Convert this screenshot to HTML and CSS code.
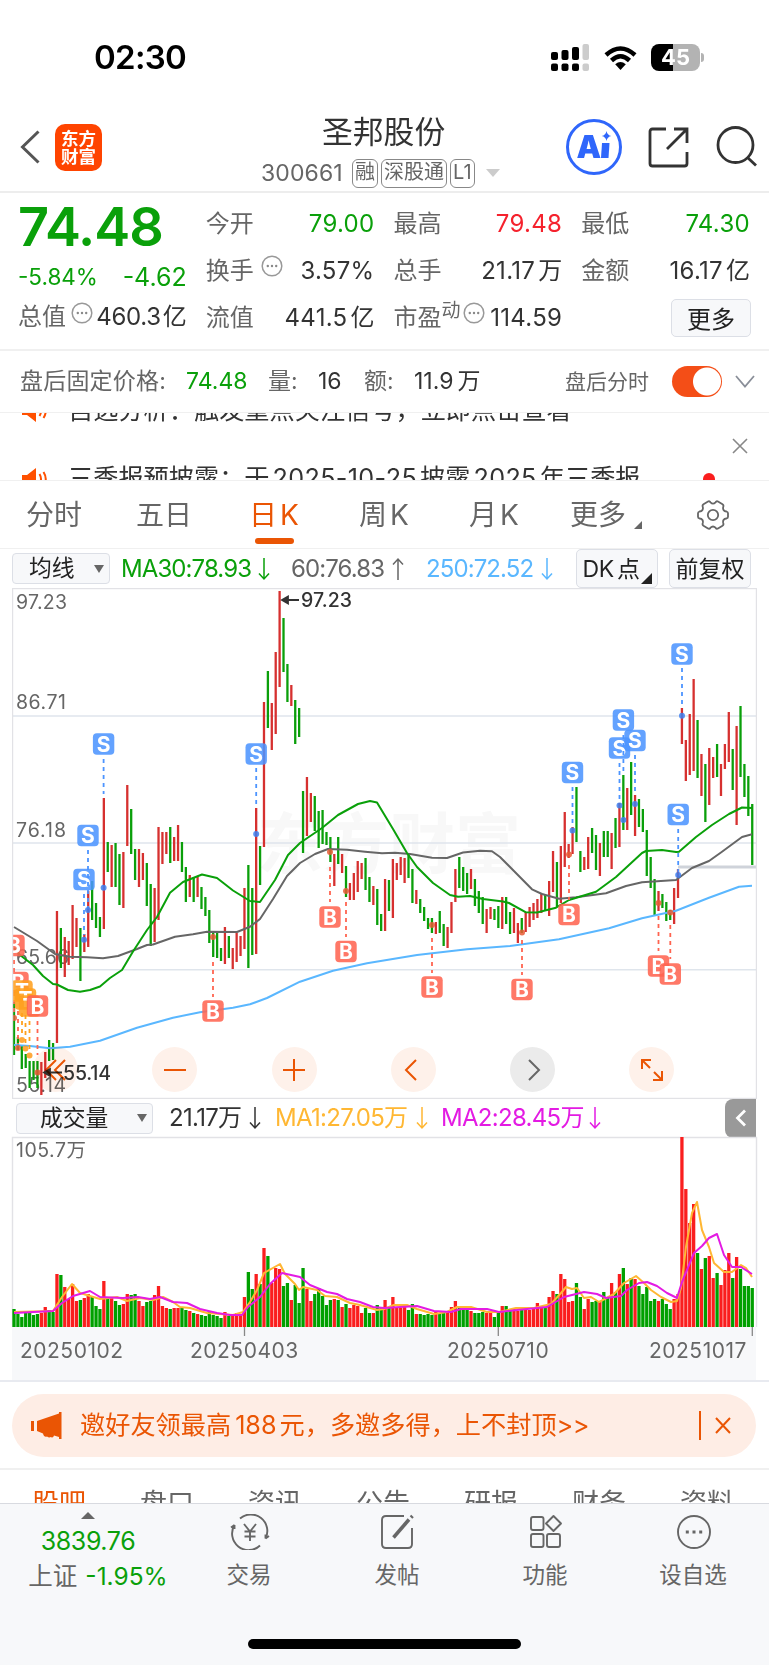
FILE: index.html
```html
<!DOCTYPE html>
<html lang="zh-CN">
<head>
    <meta charset="UTF-8">
    <meta name="viewport" content="width=device-width, initial-scale=1.0">
    <title>圣邦股份 300661</title>
    <link rel="stylesheet" href="styles.css">
</head>
<body>
    <svg class="defs" width="0" height="0">
        <symbol id="dots" viewBox="0 0 22 22">
            <circle cx="11" cy="11" r="9.8" fill="none" stroke="#999" stroke-width="1.5"/>
            <circle cx="6.8" cy="11" r="1.2" fill="#888"/>
            <circle cx="11" cy="11" r="1.2" fill="#888"/>
            <circle cx="15.2" cy="11" r="1.2" fill="#888"/>
        </symbol>
        <symbol id="down" viewBox="0 0 12 24">
            <path d="M6 1v21M1 16.5l5 5.5 5-5.5" fill="none" stroke="currentColor" stroke-width="1.5"/>
        </symbol>
        <symbol id="up" viewBox="0 0 12 24">
            <path d="M6 23V2M1 7.5L6 2l5 5.5" fill="none" stroke="currentColor" stroke-width="1.5"/>
        </symbol>
        <symbol id="horn" viewBox="0 0 26 24">
            <path d="M0 8h5l9-7v22l-9-7H0z" fill="#ff5000"/>
            <path d="M17.500 7q3 5 0 10M21.500 5q4.500 7 0 14" fill="none" stroke="#ff5000" stroke-width="2"/>
        </symbol>
    </svg>

    <div class="status">
        <span class="time">02:30</span>
        <svg class="signal" width="38" height="27" viewBox="0 0 38 27">
            <rect x="0" y="8" width="7" height="8" rx="2"/>
            <rect x="10.500" y="6" width="7" height="10" rx="2"/>
            <rect x="21" y="3" width="7" height="13" rx="2"/>
            <rect x="31.500" y="0" width="6.500" height="16" rx="2" fill="#ccc"/>
            <rect x="0" y="19.500" width="7" height="7.500" rx="2"/>
            <rect x="10.500" y="19.500" width="7" height="7.500" rx="2"/>
            <rect x="21" y="19.500" width="7" height="7.500" rx="2"/>
            <rect x="31.500" y="19.500" width="6.500" height="7.500" rx="2" fill="#ccc"/>
        </svg>
        <svg class="wifi" width="33" height="24" viewBox="0 0 33 24">
            <path d="M2 9Q16.500 -4 31 9" fill="none" stroke="#000" stroke-width="4.500"/>
            <path d="M7.500 14.500q9-8.500 18 0" fill="none" stroke="#000" stroke-width="4.500"/>
            <path d="M16.500 24l-5.300-5.800q5.300-4.600 10.600 0z"/>
        </svg>
        <div class="battery">45</div>
        <i class="battery-tip"></i>
    </div>

    <div class="header">
        <svg class="back" width="21" height="34" viewBox="0 0 21 34">
            <path d="M18.500 1.500L2.500 17l16 15.500" fill="none" stroke="#555" stroke-width="3"/>
        </svg>
        <div class="logo">东方<br>财富</div>
        <div class="title">
            <h1>圣邦股份</h1>
            <div class="code">
                <span>300661</span>
                <b>融</b><b>深股通</b><b>L1</b>
                <i class="caret"></i>
            </div>
        </div>
        <svg class="ai" width="56" height="56" viewBox="0 0 56 56">
            <circle cx="28" cy="28" r="26.500" fill="#fff" stroke="#2f66fb" stroke-width="3"/>
            <text x="10.500" y="39">A</text>
            <path d="M36 24h7.500l-1 15H35z" fill="#2f66fb"/>
            <path d="M40.500 12q.8 4.200 4.800 5-4 .8-4.800 5-.8-4.200-4.800-5 4-.8 4.800-5z" fill="#2f66fb"/>
        </svg>
        <svg class="share" width="42" height="42" viewBox="0 0 42 42">
            <path d="M18 3H4.500Q2 3 2 5.500v32Q2 40 4.500 40h32q2.500 0 2.500-2.500V26M19 23L38 4M26 3h13v14" fill="none" stroke="#333" stroke-width="2.800"/>
        </svg>
        <svg class="search" width="42" height="42" viewBox="0 0 42 42">
            <circle cx="19.500" cy="19" r="17.500" fill="none" stroke="#333" stroke-width="2.800"/>
            <path d="M31.500 31.500l8.500 8" stroke="#333" stroke-width="2.800"/>
        </svg>
    </div>

    <div class="quote">
        <div class="col first">
            <div class="price">74.48</div>
            <div class="change"><span>-5.84%</span><span class="diff">-4.62</span></div>
            <div class="row"><label>总值</label><svg class="tip"><use href="#dots"/></svg><span>460.3<u>亿</u></span></div>
        </div>
        <div class="col">
            <div class="row"><label>今开</label><span class="green">79.00</span></div>
            <div class="row"><label>换手</label><svg class="tip wide"><use href="#dots"/></svg><span>3.57%</span></div>
            <div class="row"><label>流值</label><span>441.5<u>亿</u></span></div>
        </div>
        <div class="col">
            <div class="row"><label>最高</label><span class="red">79.48</span></div>
            <div class="row"><label>总手</label><span>21.17<u>万</u></span></div>
            <div class="row"><label>市盈</label><sup>动</sup><svg class="tip"><use href="#dots"/></svg><span>114.59</span></div>
        </div>
        <div class="col">
            <div class="row"><label>最低</label><span class="green">74.30</span></div>
            <div class="row"><label>金额</label><span>16.17<u>亿</u></span></div>
            <div class="row"><button class="more">更多</button></div>
        </div>
    </div>

    <div class="after">
        <label class="fixed">盘后固定价格:</label><span class="green">74.48</span>
        <label>量:</label><span>16</span>
        <label>额:</label><span>11.9<u>万</u></span>
        <em>盘后分时</em>
        <div class="toggle"></div>
        <svg width="20" height="13" viewBox="0 0 20 13"><path d="M1 1l9 10.500L19 1" fill="none" stroke="#8a8f99" stroke-width="1.800"/></svg>
    </div>

    <div class="news">
        <div class="items">
            <div class="item"><svg width="26" height="24"><use href="#horn"/></svg>自选分析：触发重点关注信号，立即点击查看</div>
            <div class="item"><svg width="26" height="24"><use href="#horn"/></svg>三季报预披露：于<u>2025-10-25</u>披露<u>2025</u>年三季报<i class="dot"></i></div>
        </div>
        <svg class="close" width="16" height="16" viewBox="0 0 16 16"><path d="M1 1l14 14M15 1L1 15" stroke="#888" stroke-width="1.600"/></svg>
    </div>

    <div class="tabs">
        <span>分时</span>
        <span>五日</span>
        <span class="active">日<u>K</u></span>
        <span>周<u>K</u></span>
        <span>月<u>K</u></span>
        <span class="last">更多<i class="corner"></i></span>
        <svg width="32" height="32" viewBox="0 0 32 32" fill="none" stroke="#666" stroke-width="1.800">
            <path d="M11 2.500q1.500-.8 2.500.8 2.500 2.500 5 0 1-1.600 2.500-.8l4.500 2.700q1.500 1 .7 2.800-.8 4 3.300 4.500 1.500.4 1.500 1.800v3.400q0 1.400-1.500 1.800-4.100.5-3.300 4.500.8 1.800-.7 2.800L21 29.500q-1.500.8-2.500-.8-2.500-2.500-5 0-1 1.600-2.500.8l-4.500-2.700q-1.500-1-.7-2.800.8-4-3.300-4.500Q1 19.100 1 17.700v-3.400q0-1.400 1.500-1.800 4.100-.5 3.300-4.500Q5 6.200 6.500 5.200z"/>
            <circle cx="16" cy="16" r="5.200"/>
        </svg>
    </div>

    <div class="ma-bar">
        <div class="select avg">均线<i></i></div>
        <span class="ma30">MA30:78.93</span><svg class="green"><use href="#down"/></svg>
        <span class="ma60">60:76.83</span><svg class="ma60"><use href="#up"/></svg>
        <span class="ma250">250:72.52</span><svg class="ma250"><use href="#down"/></svg>
        <button class="dk">DK<u>点</u><i class="corner"></i></button>
        <button class="fq">前复权</button>
    </div>

    <div class="kline">
        <svg id="kline" width="745" height="511" viewBox="12 588 745 511"></svg>
        <div class="controls">
            <button><svg width="24" height="24" viewBox="0 0 24 24"><path d="M12 2L2 12l10 10M21 2L11 12l10 10"/></svg></button>
            <button><svg width="24" height="24" viewBox="0 0 24 24"><path d="M1 12h22"/></svg></button>
            <button><svg width="24" height="24" viewBox="0 0 24 24"><path d="M1 12h22M12 1v22"/></svg></button>
            <button><svg width="24" height="24" viewBox="0 0 24 24"><path d="M15 2L5 12l10 10"/></svg></button>
            <button class="gray"><svg width="24" height="24" viewBox="0 0 24 24"><path d="M8 2l10 10L8 22"/></svg></button>
            <button><svg width="24" height="24" viewBox="0 0 24 24"><path d="M2 11V2h9M2 2l8 8M22 13v9h-9M22 22l-8-8"/></svg></button>
        </div>
    </div>

    <div class="vol-bar">
        <div class="select vol">成交量<i></i></div>
        <span class="v0">21.17万</span><svg class="v0"><use href="#down"/></svg>
        <span class="v1">MA1:27.05万</span><svg class="v1"><use href="#down"/></svg>
        <span class="v2">MA2:28.45万</span><svg class="v2"><use href="#down"/></svg>
        <div class="collapse"><svg width="12" height="18" viewBox="0 0 12 18"><path d="M10 1.500L2.500 9l7.500 7.500" fill="none" stroke="#fff" stroke-width="2.800"/></svg></div>
    </div>
    <svg id="volume" width="745" height="190" viewBox="12 1137 745 190"></svg>
    <div class="dates">
        <span>20250102</span><span>20250403</span><span>20250710</span><span>20251017</span>
    </div>

    <div class="banner-wrap">
        <div class="banner">
            <svg width="31" height="27" viewBox="0 0 31 27" fill="#ea5504"><path d="M0 9h3v10H0zM6 9L28 1.500V0h2.500v27H28v-2l-5-1.500q-1 3-3 1.500-2 1-4-.5-3 1-4-3L6 19z"/></svg>
            <p>邀好友领最高<u>188</u>元，多邀多得，上不封顶<s>&gt;&gt;</s></p>
            <svg class="x" width="16" height="17" viewBox="0 0 16 17"><path d="M1 1l14 15M15 1L1 16" stroke="#ea5504" stroke-width="2"/></svg>
        </div>
    </div>

    <div class="subtabs">
        <span class="active">股吧</span><span>盘口</span><span>资讯</span><span>公告</span><span>研报</span><span>财务</span><span>资料</span>
    </div>

    <div class="bottom">
        <div class="index">
            <i></i>
            <div class="point">3839.76</div>
            <div class="name">上证<span>-1.95%</span></div>
        </div>
        <div class="nav">
            <svg width="40" height="36" viewBox="0 0 40 36">
                <path d="M10 4.500A16.500 16.500 0 0 1 35.500 24.500l3.500-2.500M30 31.500A16.500 16.500 0 0 1 4.500 11L1 13.500M4.500 11v4M35.500 24.500v-4"/>
                <path d="M14 10l6 7.500L26 10M20 17.500V27M14.500 17.500h11M14.500 22.500h11"/>
            </svg>
            <span>交易</span>
        </div>
        <div class="nav">
            <svg width="36" height="36" viewBox="0 0 36 36">
                <path d="M24 2H6Q2 2 2 6v24q0 4 4 4h22q4 0 4-4V14"/>
                <path d="M13.500 23.500L29 5.500" stroke-width="3.500"/><path d="M31 3.500l1.500-1.500" stroke-width="3.500"/>
            </svg>
            <span>发帖</span>
        </div>
        <div class="nav">
            <svg width="34" height="36" viewBox="0 0 34 36">
                <rect x="2" y="3" width="12.500" height="13" rx="2"/><rect x="2" y="20" width="12.500" height="13" rx="2"/><rect x="18" y="20" width="13" height="13" rx="2"/>
                <path d="M24.500 2l7.500 7.500-7.500 7.500L17 9.500z" stroke-linejoin="round"/>
            </svg>
            <span>功能</span>
        </div>
        <div class="nav">
            <svg width="36" height="36" viewBox="0 0 36 36">
                <circle cx="18" cy="18" r="16"/>
                <path d="M9.800 18h3M16.500 18h3M23.200 18h3" stroke-width="3"/>
            </svg>
            <span>设自选</span>
        </div>
        <div class="home"></div>
    </div>
    <script src="chart.js"></script>
</body>
</html>
```
FILE: styles.css
```css
* {
    box-sizing: border-box;
}

body {
    margin: 0;
    width: 769px;
    height: 1665px;
    overflow: hidden;
    background: #fff;
    color: #333;
    font-family: Inter, "Noto Sans CJK SC", sans-serif;
    font-size: 24px;
    line-height: 1;
}

svg {
    display: block;
    flex: none;
}

button {
    font-family: inherit;
    padding: 0;
    margin: 0;
}

u,
s {
    text-decoration: none;
}

.defs {
    position: absolute;
}

.green {
    color: #0aa00a;
}

.red {
    color: #f5222d;
}

/* status bar */
.status {
    display: flex;
    align-items: center;
    height: 115px;
    padding-left: 94px;
}

.time {
    width: 457px;
    font-size: 33px;
    font-weight: 600;
    color: #000;
    letter-spacing: -0.7px;
}

.wifi {
    margin: 0 14px 0 15px;
}

.battery {
    width: 49px;
    height: 27px;
    border-radius: 8px;
    background: linear-gradient(90deg, #000 45%, #b3b3b3 45%);
    color: #fff;
    font-size: 22px;
    font-weight: 700;
    line-height: 27px;
    text-align: center;
}

.battery-tip {
    width: 3px;
    height: 9px;
    margin-left: 1px;
    border-radius: 0 3px 3px 0;
    background: #b3b3b3;
}

/* header */
.header {
    display: flex;
    align-items: center;
    height: 78px;
    padding: 0 0 12px 20px;
    border-bottom: 2px solid #ededed;
}

.logo {
    width: 47px;
    height: 47px;
    margin-left: 14px;
    padding: 6px 0 0 6px;
    border-radius: 10px;
    background: #ff4400;
    color: #fff;
    font-size: 17.500px;
    font-weight: 700;
    line-height: 18px;
    white-space: nowrap;
}

.title {
    width: 248px;
    margin-left: 159px;
    padding-top: 8px;
}

h1 {
    margin: 0;
    padding-left: 61px;
    font-size: 30.800px;
    font-weight: 400;
    line-height: 36px;
}

.code {
    display: flex;
    align-items: center;
    height: 30px;
    margin-top: 8px;
    color: #666;
    font-size: 23px;
}

.code span {
    width: 91px;
    letter-spacing: 0.1px;
}

.code b {
    height: 29px;
    margin-right: 3px;
    padding: 0 2px;
    border: 1.500px solid #888;
    border-radius: 6px;
    font-size: 20px;
    font-weight: 400;
    line-height: 25px;
    white-space: nowrap;
}

.caret {
    margin-left: 8px;
    border: 7px solid transparent;
    border-top: 8px solid #ccc;
    border-bottom: 0;
}

.ai {
    margin-left: 57px;
}

.ai text {
    font-size: 31px;
    font-weight: 900;
    fill: #2f66fb;
}

.share {
    margin-left: 26px;
}

.search {
    margin-left: 26px;
}

/* quote table */
.quote {
    display: flex;
    gap: 19px;
    height: 158px;
    padding: 7px 19px 0 18px;
    border-bottom: 2px solid #f0f0f0;
}

.col {
    width: 169px;
}

.row {
    display: flex;
    align-items: center;
    height: 47px;
}

.row label {
    color: #666;
}

.row span {
    margin-left: auto;
    letter-spacing: 0.3px;
    white-space: nowrap;
}

.row u {
    margin-left: 3px;
    letter-spacing: 0;
}

.tip {
    width: 22px;
    height: 22px;
    margin: -9px 0 0 5px;
}

.tip.wide {
    margin-left: 7px;
}

.row sup {
    margin-top: -14px;
    font-size: 19px;
    color: #666;
}

.row sup + .tip {
    margin-left: 2px;
}

.first .row {
    height: 46px;
}

.first .row span {
    letter-spacing: -0.3px;
}

.first .row u {
    margin-left: 2px;
}

.price {
    height: 55px;
    color: #0aa00a;
    font-size: 54px;
    font-weight: 600;
    letter-spacing: -1px;
}

.change {
    display: flex;
    justify-content: space-between;
    align-items: center;
    height: 39px;
    padding-top: 5px;
    color: #0aa00a;
    font-size: 22.500px;
}

.diff {
    font-size: 25px;
}

.more {
    width: 80px;
    height: 38px;
    margin-left: auto;
    margin-right: -1px;
    padding-bottom: 3px;
    border: 1.500px solid #dcdfe6;
    border-radius: 5px;
    background: #f7f8fa;
    color: #222;
    font-size: 24px;
}

/* fixed price after close */
.after {
    display: flex;
    align-items: center;
    height: 62px;
    padding: 0 0 1px 20px;
    border-bottom: 1px solid #f0f0f0;
    font-size: 23px;
    white-space: nowrap;
}

.after label {
    width: 50px;
    color: #666;
}

.after .fixed {
    width: 166px;
    letter-spacing: 0.2px;
}

.after span {
    width: 82px;
}

.after u {
    margin-left: 4px;
}

.after label + span:nth-of-type(2) {
    width: 46px;
}

.after em {
    width: 107px;
    margin-left: 69px;
    color: #666;
    font-size: 21px;
    font-style: normal;
}

.toggle {
    width: 50px;
    height: 31px;
    margin-right: 13px;
    border-radius: 16px;
    background: radial-gradient(circle at 35px 15.500px, #fff 13.500px, #f44e17 14.500px);
}

/* news ticker */
.news {
    position: relative;
    height: 68px;
    overflow: hidden;
    border-bottom: 1px solid #f0f0f0;
}

.items {
    margin-top: -36px;
}

.item {
    display: flex;
    align-items: center;
    height: 68px;
    padding-left: 22px;
    font-size: 25.200px;
    white-space: nowrap;
}

.item svg {
    margin-right: 20px;
}

.item u {
    margin: 0 3px;
    letter-spacing: 0.35px;
}

.dot {
    width: 12px;
    height: 12px;
    margin-left: 62px;
    border-radius: 50%;
    background: #fa1e1e;
}

.close {
    position: absolute;
    left: 732px;
    top: 25px;
}

/* period tabs */
.tabs {
    display: flex;
    align-items: center;
    height: 68px;
    padding-left: 26px;
    border-bottom: 1px solid #f0f0f0;
    color: #666;
    font-size: 28px;
}

.tabs span {
    position: relative;
    width: 110px;
    white-space: nowrap;
}

.tabs u {
    margin-left: 3px;
}

.tabs span:nth-child(2) {
    width: 113px;
}

.tabs .active {
    color: #ea5504;
}

.tabs .active::after {
    content: "";
    position: absolute;
    left: 6px;
    top: 37px;
    width: 39px;
    height: 6px;
    border-radius: 3px;
    background: #ea5504;
}

.tabs span:nth-child(5) {
    width: 101px;
}

.tabs .last {
    display: flex;
    align-items: flex-end;
    width: 127px;
}

.corner {
    border-left: 8px solid transparent;
    border-bottom: 8px solid #666;
}

.last .corner {
    margin: 0 0 0 8px;
}

/* indicator bars */
.ma-bar,
.vol-bar {
    display: flex;
    align-items: center;
    height: 39px;
    padding-left: 12px;
    white-space: nowrap;
}

.ma-bar svg,
.vol-bar > svg {
    width: 12px;
    height: 24px;
}

.select {
    display: flex;
    align-items: center;
    justify-content: space-between;
    height: 31px;
    border: 1.500px solid #dcdfe6;
    border-radius: 4px;
    background: #f7f8fa;
    color: #222;
    font-size: 22.800px;
}

.select i {
    border: 5px solid transparent;
    border-top: 8px solid #666;
    border-bottom: 0;
}

.avg {
    width: 98px;
    padding: 0 5px 0 16px;
}

.ma-bar span {
    letter-spacing: -0.9px;
}

.ma30 {
    width: 137px;
    margin-left: 11px;
    color: #0aa00a;
}

span.ma60 {
    width: 101px;
    margin-left: 21px;
}

.ma60 {
    color: #666;
}

span.ma250 {
    width: 115px;
    margin-left: 22px;
}

.ma250 {
    color: #5ab7ff;
}

.ma-bar button {
    height: 39px;
    padding-bottom: 3px;
    border: 1.500px solid #dcdfe6;
    border-radius: 5px;
    background: #f7f8fa;
    color: #222;
    font-size: 23px;
}

.dk {
    position: relative;
    width: 82px;
    margin: 0 11px 0 23px;
    padding-right: 12px;
    letter-spacing: -0.3px;
}

.dk u {
    margin-left: 3px;
}

.dk .corner {
    position: absolute;
    right: 5px;
    bottom: 3px;
    border-left-width: 11px;
    border-bottom: 11px solid #222;
}

.fq {
    width: 82px;
}

/* candlestick chart */
.kline {
    position: relative;
    height: 511px;
    padding-left: 12px;
}

.controls {
    position: absolute;
    left: 33px;
    bottom: 7px;
    display: flex;
    gap: 74.300px;
    mix-blend-mode: multiply;
}

.controls button {
    display: flex;
    align-items: center;
    justify-content: center;
    width: 45px;
    height: 45px;
    border: 0;
    border-radius: 50%;
    background: #fef1ea;
}

.controls .gray {
    background: #ebebeb;
}

.controls path {
    fill: none;
    stroke: #ea5504;
    stroke-width: 2;
}

.controls .gray path {
    stroke: #666;
}

.kline text,
#volume text {
    font-size: 19.500px;
    fill: #666;
}

.mark {
    font-weight: 700;
}

.kline .mark text {
    font-size: 21px;
    fill: #fff;
    text-anchor: middle;
}

.kline .water {
    font-size: 66px;
    font-weight: 700;
    fill: #f8f8f8;
}

.kline .peak {
    fill: #333;
    font-weight: 500;
}

/* volume */
.vol-bar {
    height: 38px;
    padding-left: 16px;
}

.vol {
    width: 137px;
    padding: 0 5px 0 23px;
}

.vol-bar span {
    letter-spacing: -0.7px;
}

span.v0 {
    width: 80px;
    margin-left: 16px;
}

span.v1 {
    width: 141px;
    margin-left: 14px;
}

.v1 {
    color: #ffb733;
}

span.v2 {
    width: 148px;
    margin-left: 13px;
}

.v2 {
    color: #e31be3;
}

.collapse {
    display: flex;
    align-items: center;
    justify-content: center;
    width: 31px;
    height: 39px;
    margin-left: auto;
    margin-right: 13px;
    border-radius: 8px 0 0 8px;
    background: #999;
}

#volume {
    margin-left: 12px;
}

.dates {
    display: flex;
    height: 53px;
    margin: 0 13px 0 12px;
    padding: 13px 0 0 8px;
    background: #f7f8fa;
    color: #666;
    font-size: 21px;
    letter-spacing: 0.5px;
}

.dates span:nth-child(1) {
    width: 170px;
}

.dates span:nth-child(2) {
    width: 257px;
}

.dates span:nth-child(3) {
    width: 202px;
}

/* promo banner */
.banner-wrap {
    height: 90px;
    padding: 12px 13px 0 12px;
    border-top: 2px solid #e8eaf0;
    border-bottom: 2px solid #f0f0f0;
}

.banner {
    display: flex;
    align-items: center;
    height: 63px;
    padding-left: 19px;
    border-radius: 32px;
    background: #feede5;
    color: #ea5504;
    font-size: 25.200px;
    white-space: nowrap;
}

.banner p {
    width: 621px;
    margin: 0 0 0 18px;
    line-height: 29px;
    border-right: 2px solid #ea5504;
}

.banner u {
    margin: 0 3px 0 4px;
}

.banner s {
    letter-spacing: -0.5px;
}

.x {
    margin-left: 14px;
}

.subtabs {
    display: flex;
    gap: 54px;
    height: 33px;
    padding: 20px 0 0 32px;
    overflow: hidden;
    color: #666;
    font-size: 27px;
    line-height: 27px;
}

.subtabs .active {
    color: #ea5504;
}

/* bottom bar */
.bottom {
    position: relative;
    display: flex;
    height: 162px;
    border-top: 1.500px solid #d8dae0;
    background: #f7f8fa;
    color: #666;
}

.index {
    width: 176px;
    padding-top: 8px;
    text-align: center;
}

.index i {
    display: block;
    width: 14px;
    margin: 0 auto;
    border: 7px solid transparent;
    border-top: 0;
    border-bottom: 7px solid #666;
}

.point {
    margin-top: 10px;
    color: #0aa00a;
    font-size: 25px;
    letter-spacing: -0.4px;
}

.name {
    margin-top: 10px;
    padding-left: 20px;
    font-size: 24.500px;
    white-space: nowrap;
}

.name span {
    margin-left: 8px;
    color: #0aa00a;
}

.nav {
    display: flex;
    flex-direction: column;
    align-items: center;
    width: 148px;
    padding-top: 10px;
    font-size: 22.500px;
}

.nav svg {
    fill: none;
    stroke: #666;
    stroke-width: 1.900;
}

.nav span {
    margin-top: 14px;
    margin-right: 2px;
}

.home {
    position: absolute;
    left: 248px;
    bottom: 16px;
    width: 273px;
    height: 10px;
    border-radius: 5px;
    background: #000;
}
```
FILE: chart.js
```js
const RED = '#d6302f';
const GREEN = '#0a9f0a';
const STEP = 3.906;
const X0 = 14;

// one entry per trading day: colour, high, low
const days = `g1002,1055 g1037,1050 g1045,1069 g1054,1068 g1061,1088 g1061,1080 g1061,1088 r1062,1095 r1052,1078 g1040,1061
g1043,1060 r911,1043 g928,968 r937,977 r941,965 r905,959 r918,947 g928,981 r934,952 r891,947
g881,920 g903,928 g917,937 r798,929 g842,872 r845,887 g843,887 g854,905 r852,908 r785,846
g809,854 g849,880 r849,887 r853,880 g863,906 g884,946 r888,942 r827,920 r832,864 r832,854
g827,863 r837,861 r825,861 g842,872 g867,902 r875,897 g877,902 r877,897 g887,909 g897,916
g910,943 g932,957 g933,958 g948,961 r927,964 g936,958 r948,969 r933,962 r936,956 r888,949
g865,968 g888,955 r808,954 g846,885 r702,847 g671,728 r703,750 r652,734 r591,687 g618,672
g664,702 r685,706 g700,744 g708,737 g791,853 r777,836 r793,822 g796,831 g811,848 g810,844
g832,845 g837,862 r854,886 g837,864 r854,873 g866,897 r883,900 r873,900 r861,892 r863,879
g858,890 g877,902 r886,905 g889,925 g914,931 r879,931 g880,911 r859,918 r863,880 r857,875
r858,883 g855,878 g869,903 r890,904 g899,913 g907,921 g918,929 g918,933 r922,934 g911,933
g924,946 r927,948 r902,933 r869,902 g857,888 g867,891 g873,894 r869,889 g879,906 g891,913
g897,924 r909,933 r907,919 g909,920 g906,928 r897,929 g897,924 g912,934 r908,933 r923,943
g918,933 r912,932 r907,927 r903,920 r899,918 r893,913 g895,910 r881,916 r851,892 g862,907
r846,903 r812,867 r844,858 r827,854 g787,842 g851,872 r857,870 r837,869 g828,853 g835,870
r843,876 g831,857 g831,857 r833,869 g818,848 r803,847 g775,830 r788,830 g762,815 r795,836
g799,827 g809,832 g830,876 g857,888 g879,916 r891,911 g894,908 g902,921 g910,920 r888,924
r869,898 r708,744 r740,781 r714,775 r679,771 g720,778 r754,796 g764,822 r748,805 r757,778
g744,777 r764,796 r744,769 r712,762 g749,790 r726,825 g706,777 g764,797 g776,816 g804,865`.split(/\s+/);

// volume bar heights, same order
const volumes = `18 13 10 15 16 12 13 14 20 17 15 53 52 40 28 43 26 27 29 33 31 21 18 46 29 29 26 22 23 33
32 33 26 21 25 26 32 41 21 19 18 19 19 19 17 16 14 13 12 11 16 12 11 9 15 11 11 14 13 30
55 38 53 43 79 71 44 59 58 41 44 27 42 24 59 38 26 33 39 31 22 27 28 27 20 23 19 22 21 14
19 14 14 22 20 27 20 30 19 19 20 17 23 13 13 12 13 12 15 14 15 15 20 26 19 17 18 16 14 14
15 14 14 10 14 21 21 18 18 16 17 18 17 18 24 20 20 30 36 33 53 48 25 26 44 30 18 28 25 26
26 35 30 44 35 53 59 43 49 48 41 33 40 26 28 26 28 23 18 28 33 190 138 104 123 74 58 69 71 49
54 42 57 74 49 70 58 41 41 39`.split(/\s+/).map(Number);

const ma30 = '14,948 20,955 33,965 43,976 53,984 57,984.5 68,990 80,991.7 90,990 100,986.5 110,978 122,970 133,951.5 147,930 157,917 170,892.7 183,882 202,874.5 217,878 233,890.5 250,901 260,902 275,880 288,855 300,843 322,828 338,815 358,804 370,801 377,802.5 393,829 407,853 417,867 433,883 450,895 458,896.7 470,896 483,899 503,901.5 509,903 526,912.3 537,912.5 556,907.7 569,900 596,891.7 616,877 642,853 646,851 662,850 676,852 679,851.7 696,837 712,825 729,814 742,807.5 752,808';
const ma60 = '14,927 37,941 55,954 70,956.7 87,957.3 103,958.3 118,956 137,949 147,945 153,944.5 175,936.7 193,934.3 207,931.7 237,932 250,926.7 260,919 273,899 287,876 300,863 315,854 328,849 347,849.7 365,851.7 382,853.3 395,852.7 410,854 432,857.7 447,858 463,852.5 480,850.7 492,851.3 500,857 509,866 532,889.3 542,894 559,898.7 576,897.3 606,893.3 626,886 642,882.3 676,880 692,868 709,861 722,851.7 742,837 752,834.3';
const ma250 = '14,1045 30,1046 50,1048.3 70,1046.7 100,1040.7 137,1027.7 173,1017.7 200,1012.3 233,1007.7 250,1004.3 267,998 300,981.7 333,970.7 367,963.3 417,955 467,949.3 510,946 559,939.3 609,928.3 642,918.3 676,910.7 709,897.7 739,886.7 752,885.7';
const volMa1 = '14,1312 53,1311 62,1297 72,1284 80,1293 100,1299 117,1297 127,1301 140,1298 153,1300 163,1297 173,1302 180,1307 190,1308 207,1313 220,1314 233,1315 243,1312 250,1302 257,1290 264,1273 280,1264 285,1274 295,1284 299,1290 303,1287 317,1290 325,1296 337,1297 350,1303 360,1305 377,1310 384,1309 394,1305 407,1305 417,1309 434,1314 447,1312 457,1307 471,1307 487,1312 499,1312 516,1308 534,1308 551,1304 561,1293 566,1287 572,1289 577,1288 584,1298 591,1297 599,1302 614,1294 624,1283 636,1276 644,1283 651,1290 661,1297 671,1302 677,1301 681,1288 686,1247 692,1213 697,1202 702,1230 709,1247 714,1263 724,1272 732,1272 741,1265 746,1268 752,1277';
const volMa2 = '14,1313 53,1311 62,1303 73,1296 90,1291 100,1297 123,1298 138,1297 150,1299 160,1297 173,1302 187,1303 200,1309 217,1313 230,1315 242,1315 248,1307 260,1297 270,1284 282,1273 300,1277 310,1285 327,1292 337,1294 347,1299 360,1302 373,1307 384,1308 417,1306 434,1311 451,1312 461,1309 487,1309 499,1312 517,1310 547,1307 564,1297 584,1292 597,1294 606,1298 621,1296 627,1290 639,1283 647,1282 657,1286 667,1293 677,1298 682,1282 694,1253 702,1246 709,1238 717,1234 724,1255 732,1267 741,1267 752,1274';

function line(x1, y1, x2, y2, color, width, extra = '') {
    return `<line x1="${x1}" y1="${y1}" x2="${x2}" y2="${y2}" stroke="${color}" stroke-width="${width}" ${extra}/>`;
}

function curve(points, color, width = 2) {
    return `<polyline points="${points}" fill="none" stroke="${color}" stroke-width="${width}" stroke-linejoin="round"/>`;
}

function label(x, y, text, width, cls = '') {
    return `<text class="${cls}" x="${x}" y="${y}" textLength="${width}">${text}</text>`;
}

// letter, x, badge y, dash start, dash end, dot y
const marks = [
    ['B', 14, 945.5, 960, 1014, 1018], ['B', 18, 982.5, 1011, 1044, 1048],
    ['T', 22, 991, 1013, 1036, 1040], ['T', 25.5, 999, 1015, 1044, 1048.5], ['T', 29.5, 1006, 1021, 1052, 1055.5],
    ['B', 37.5, 1006, 1021, 1055, 1072.5], ['B', 213, 1011, 962, 997, 937], ['B', 330, 917, 867, 902, 852],
    ['B', 346, 951.5, 902, 937, 891], ['B', 432, 987, 938, 973, 925], ['B', 522, 989.5, 940, 975, 932.5],
    ['B', 569, 914.5, 865, 900, 854.5], ['B', 658.5, 966, 916, 951, 903], ['B', 670.3, 974, 925, 959, 912.5],
    ['S', 84, 879.5, 894, 935, 939.7], ['S', 88, 835.5, 850, 909, 910], ['S', 103.6, 744, 759, 794, 887.7],
    ['S', 256.2, 754, 768, 804, 834], ['S', 572.5, 772.5, 787, 826, 830.5], ['S', 619.5, 748, 763, 802, 805.5],
    ['S', 623.4, 720, 735, 771, 820], ['S', 635, 740.5, 755, 792, 804], ['S', 678.2, 814.5, 829, 872, 875],
    ['S', 682, 654, 668, 704, 715.7]
];
const markColors = { S: '#4c94ff', B: '#ff6450', T: '#ffa01e' };
const dotColors = { S: '#3c7ff0', B: '#e85a35', T: '#ff9a1a' };

let k = '<text class="water" x="257" y="868">东方财富</text>';
[716, 843, 969.7].forEach(y => k += line(12, y, 757, y, '#dfe5ec', 1.5));
k += line(678, 867, 756, 867, '#cfd3da', 3);
k += label(16, 609, '97.23', 51) + label(16, 709, '86.71', 50) + label(16, 836.5, '76.18', 50);
k += label(16, 964, '65.66', 53) + label(16, 1091.5, '55.14', 50);
days.forEach((d, i) => {
    const [high, low] = d.slice(1).split(',');
    const x = X0 + i * STEP;
    k += line(x, high, x, low, d[0] === 'r' ? RED : GREEN, 2.3);
});
k += curve(ma250, '#5ab7ff') + curve(ma60, '#666') + curve(ma30, '#0aa00a');
marks.forEach(([letter, x, y, from, to, dot]) => {
    k += line(x, from, x, to, markColors[letter], 1.8, 'stroke-dasharray="4 4"');
    k += `<circle cx="${x}" cy="${dot}" r="3" fill="${dotColors[letter]}" fill-opacity=".85"/>`;
    k += `<g class="mark"><rect x="${x - 10.7}" y="${y - 10.7}" width="21.4" height="21.4" rx="4" fill="${markColors[letter]}" fill-opacity=".87"/><text x="${x}" y="${y + 7.6}">${letter}</text></g>`;
});
k += '<path d="M283 600h16M288 596.500l-6 3.500 6 3.500z" stroke="#333" stroke-width="1.800" fill="#333"/>';
k += label(301, 607, '97.23', 51, 'peak');
k += '<path d="M45 1072.500h17M50 1069l-6 3.500 6 3.500z" stroke="#333" stroke-width="1.800" fill="#333"/>';
k += label(63, 1080, '55.14', 48, 'peak');
k += '<rect x="12.5" y="588.5" width="744" height="510" fill="none" stroke="#e2e2e6" stroke-width="1.4"/>';
document.getElementById('kline').innerHTML = k;

let v = '<path d="M12.500 1327V1137.500H756.500V1327" fill="none" stroke="#e2e2e6" stroke-width="1.400"/>';
volumes.forEach((h, i) => {
    v += `<rect x="${X0 + i * STEP - 1.65}" y="${1327 - h}" width="3.3" height="${h}" fill="${days[i][0] === 'r' ? '#fa1e1e' : '#00a000'}"/>`;
});
v += curve(volMa1, '#ffb733') + curve(volMa2, '#e31be3');
v += label(16, 1156.5, '105.7万', 70);

// date ticks hang below the volume frame
[244.5, 498.3, 752.3].forEach(x => v += line(x, 1327, x, 1336, '#888', 1.3));
document.getElementById('volume').innerHTML = v;
document.getElementById('volume').style.overflow = 'visible';
```
